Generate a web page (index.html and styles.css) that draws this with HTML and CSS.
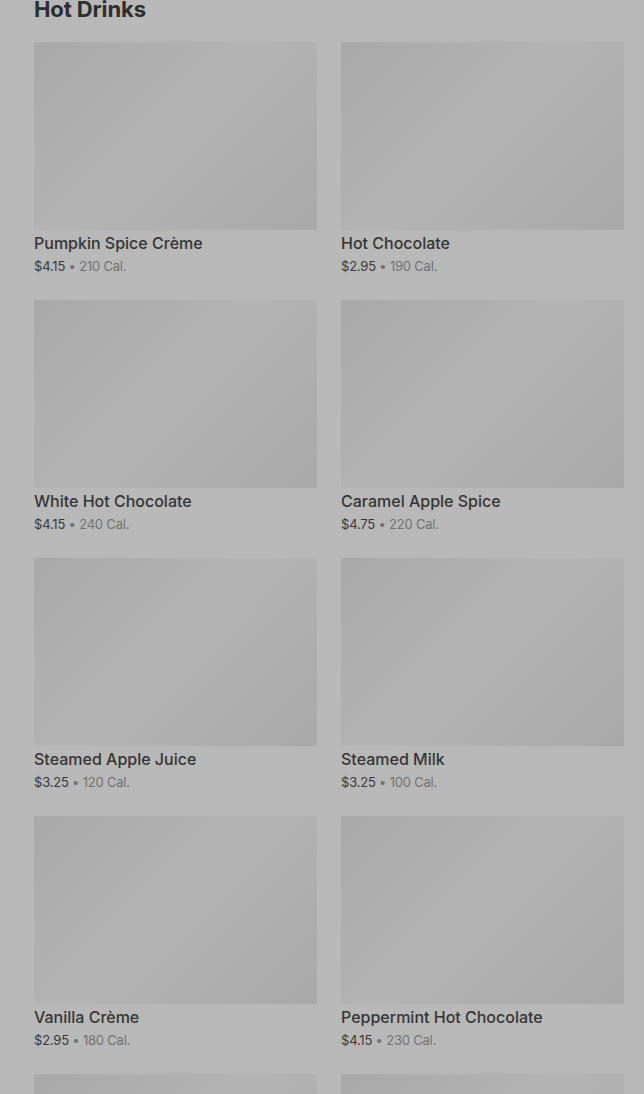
FILE: index.html
```html
<!DOCTYPE html>
<html lang="en">
<head>
  <meta charset="UTF-8">
  <meta name="viewport" content="width=device-width, initial-scale=1.0">
  <title>Hot Drinks</title>
  <link rel="stylesheet" href="styles.css">
</head>
<body>
  <section class="menu-section">
    <h2 class="section-title">Hot Drinks</h2>
    <div class="item-grid">
      <div class="item">
        <div class="item-image"></div>
        <div class="item-name">Pumpkin Spice Crème</div>
        <div class="item-meta"><span class="price">$4.15</span> • 210 Cal.</div>
      </div>
      <div class="item">
        <div class="item-image"></div>
        <div class="item-name">Hot Chocolate</div>
        <div class="item-meta"><span class="price">$2.95</span> • 190 Cal.</div>
      </div>
      <div class="item">
        <div class="item-image"></div>
        <div class="item-name">White Hot Chocolate</div>
        <div class="item-meta"><span class="price">$4.15</span> • 240 Cal.</div>
      </div>
      <div class="item">
        <div class="item-image"></div>
        <div class="item-name">Caramel Apple Spice</div>
        <div class="item-meta"><span class="price">$4.75</span> • 220 Cal.</div>
      </div>
      <div class="item">
        <div class="item-image"></div>
        <div class="item-name">Steamed Apple Juice</div>
        <div class="item-meta"><span class="price">$3.25</span> • 120 Cal.</div>
      </div>
      <div class="item">
        <div class="item-image"></div>
        <div class="item-name">Steamed Milk</div>
        <div class="item-meta"><span class="price">$3.25</span> • 100 Cal.</div>
      </div>
      <div class="item">
        <div class="item-image"></div>
        <div class="item-name">Vanilla Crème</div>
        <div class="item-meta"><span class="price">$2.95</span> • 180 Cal.</div>
      </div>
      <div class="item">
        <div class="item-image"></div>
        <div class="item-name">Peppermint Hot Chocolate</div>
        <div class="item-meta"><span class="price">$4.15</span> • 230 Cal.</div>
      </div>
      <div class="item">
        <div class="item-image"></div>
      </div>
      <div class="item">
        <div class="item-image"></div>
      </div>
    </div>
  </section>
</body>
</html>
```

FILE: styles.css
```css
body {
  margin: 0;
  padding: 0;
  background: #b8b8b8;
  font-family: Inter, "Noto Sans", sans-serif;
  color: #333;
  overflow: hidden;
}
.menu-section {
  padding: 0 20px 0 34px;
}
.section-title {
  margin: -5px 0 19px;
  font-size: 22px;
  line-height: 28px;
  font-weight: 700;
  letter-spacing: -0.1px;
  color: #2e2e2e;
}
.item-grid {
  display: grid;
  grid-template-columns: 283px 283px;
  column-gap: 24px;
  row-gap: 25px;
}
.item-image {
  height: 188px;
  background: linear-gradient(135deg, #a9a9a9 0%, #b3b3b3 45%, #b1b1b1 62%, #a9a9a9 100%);
}
.item-name {
  margin-top: 2px;
  font-size: 16px;
  line-height: 22px;
  font-weight: 500;
  color: #353535;
}
.item-meta {
  margin-top: 3px;
  font-size: 13px;
  line-height: 18px;
  letter-spacing: -0.2px;
  color: #727272;
}
.price {
  color: #383838;
}
```
